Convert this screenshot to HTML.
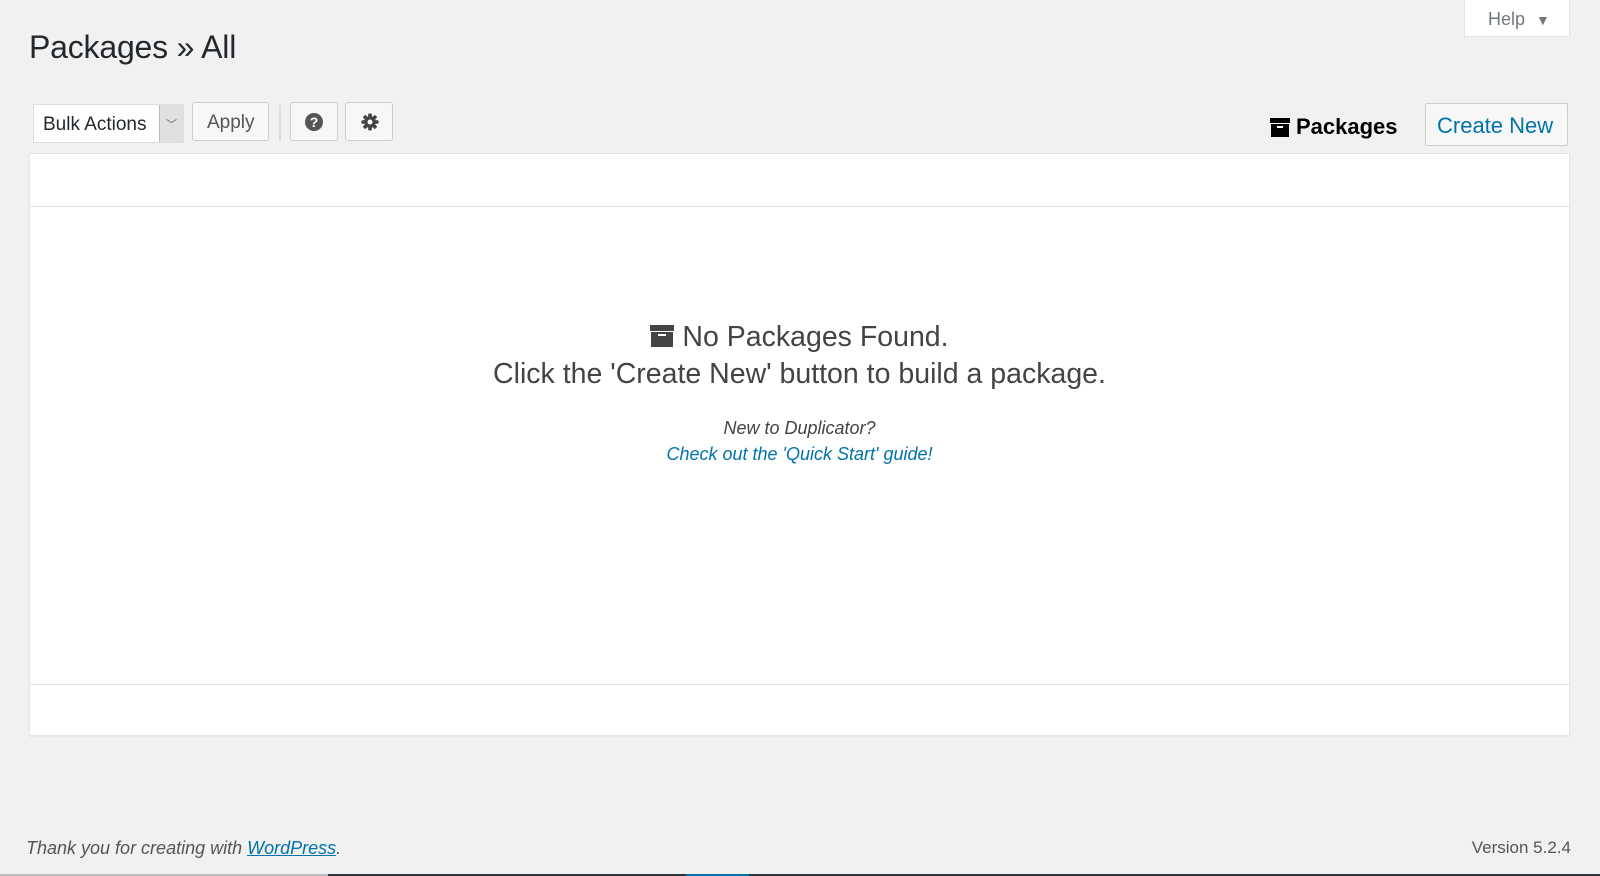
<!DOCTYPE html>
<html><head><meta charset="utf-8"><style>
*{box-sizing:border-box;margin:0;padding:0}
body{width:1600px;height:876px;background:#f1f1f1;font-family:"Liberation Sans",sans-serif;color:#23282d;position:relative;overflow:hidden}
.abs{position:absolute}
h1{position:absolute;left:29px;top:29px;font-size:32px;font-weight:400;color:#23282d;letter-spacing:-0.2px}
.help{left:1464px;top:0;width:106px;height:37px;background:#fff;border:1px solid #e2e4e7;border-top:0;font-size:18px;color:#72777c;padding:9px 0 0 23px}
.btn{background:#f7f7f7;border:1px solid #ccc;border-radius:3px;color:#555;font-size:19px}
.sel{left:33px;top:104px;width:151px;height:39px;background:#fff;border:1px solid #ddd;font-size:19px;padding:9px 0 0 9px}
.sel .arr{position:absolute;right:0;top:0;width:24px;height:37px;background:#e0e0e0;border-left:1px solid #bbb;color:#666;font-size:11px;text-align:center;padding-top:11px}
.panel{left:29px;top:153px;width:1541px;height:583px;background:#fff;border:1px solid #e5e5e5;box-shadow:0 1px 1px rgba(0,0,0,.05)}
.c{position:absolute;left:0;width:100%;text-align:center}
</style></head><body>
<h1>Packages » All</h1>
<div class="abs help">Help <span style="font-size:14px;margin-left:6px">▼</span></div>
<div class="abs sel">Bulk Actions<div class="arr">﹀</div></div>
<div class="abs btn" style="left:192px;top:102px;width:77px;height:39px;padding:9px 0 0 14px">Apply</div>
<div class="abs" style="left:279px;top:105px;width:2px;height:36px;background:#ddd"></div>
<div class="abs btn" style="left:290px;top:102px;width:48px;height:39px">
<svg style="position:absolute;left:13px;top:9px" width="20" height="20" viewBox="0 0 20 20"><circle cx="10" cy="10" r="9" fill="#555"/><text x="10" y="15" text-anchor="middle" font-family="Liberation Sans" font-weight="bold" font-size="14" fill="#fff">?</text></svg></div>
<div class="abs btn" style="left:345px;top:102px;width:48px;height:39px">
<svg style="position:absolute;left:15px;top:10px" width="18" height="18" viewBox="0 0 20 20"><g fill="#444"><circle cx="10" cy="10" r="6.5"/><rect x="8" y="0.5" width="4" height="19" rx="1"/><rect x="0.5" y="8" width="19" height="4" rx="1"/><rect x="8" y="0.5" width="4" height="19" rx="1" transform="rotate(45 10 10)"/><rect x="8" y="0.5" width="4" height="19" rx="1" transform="rotate(-45 10 10)"/></g><circle cx="10" cy="10" r="2.8" fill="#f7f7f7"/></svg></div>
<svg class="abs" style="left:1270px;top:118px" width="20" height="19" viewBox="0 0 20 19"><rect x="0" y="0" width="20" height="5" fill="#000"/><rect x="1" y="6" width="18" height="13" fill="#000"/><rect x="7" y="8" width="6" height="2" fill="#fff"/></svg>
<div class="abs" style="left:1296px;top:114px;font-size:22px;font-weight:bold;color:#000">Packages</div>
<div class="abs btn" style="left:1425px;top:103px;width:143px;height:43px;color:#0073aa;font-size:22px;padding:9px 0 0 11px;border-radius:2px">Create New</div>
<div class="abs panel">
<div style="position:absolute;left:0;top:52px;width:100%;height:1px;background:#e1e1e1"></div>
<div style="position:absolute;left:0;top:530px;width:100%;height:1px;background:#e1e1e1"></div>
<div class="c" style="top:167px;font-size:28.5px;color:#444"><svg width="24" height="22" viewBox="0 0 24 22" style="vertical-align:-1px;margin-right:8px"><rect x="0" y="0" width="24" height="6" fill="#444"/><rect x="1" y="7" width="22" height="15" fill="#444"/><rect x="8" y="9" width="8" height="2" fill="#fff"/></svg>No Packages Found.</div>
<div class="c" style="top:204px;font-size:28.5px;color:#444">Click the 'Create New' button to build a package.</div>
<div class="c" style="top:264px;font-size:18px;font-style:italic;color:#444">New to Duplicator?</div>
<div class="c" style="top:290px;font-size:18px;font-style:italic;color:#0073aa">Check out the 'Quick Start' guide!</div>
</div>
<div class="abs" style="left:26px;top:838px;font-size:18px;font-style:italic;color:#555">Thank you for creating with <span style="color:#0073aa;text-decoration:underline">WordPress</span>.</div>
<div class="abs" style="right:29px;top:838px;font-size:17px;color:#555">Version 5.2.4</div>
<div class="abs" style="left:0;top:874px;width:328px;height:2px;background:#bbb"></div>
<div class="abs" style="left:328px;top:874px;width:1272px;height:2px;background:#32373c"></div>
<div class="abs" style="left:686px;top:874px;width:63px;height:2px;background:#0073aa"></div>
</body></html>
